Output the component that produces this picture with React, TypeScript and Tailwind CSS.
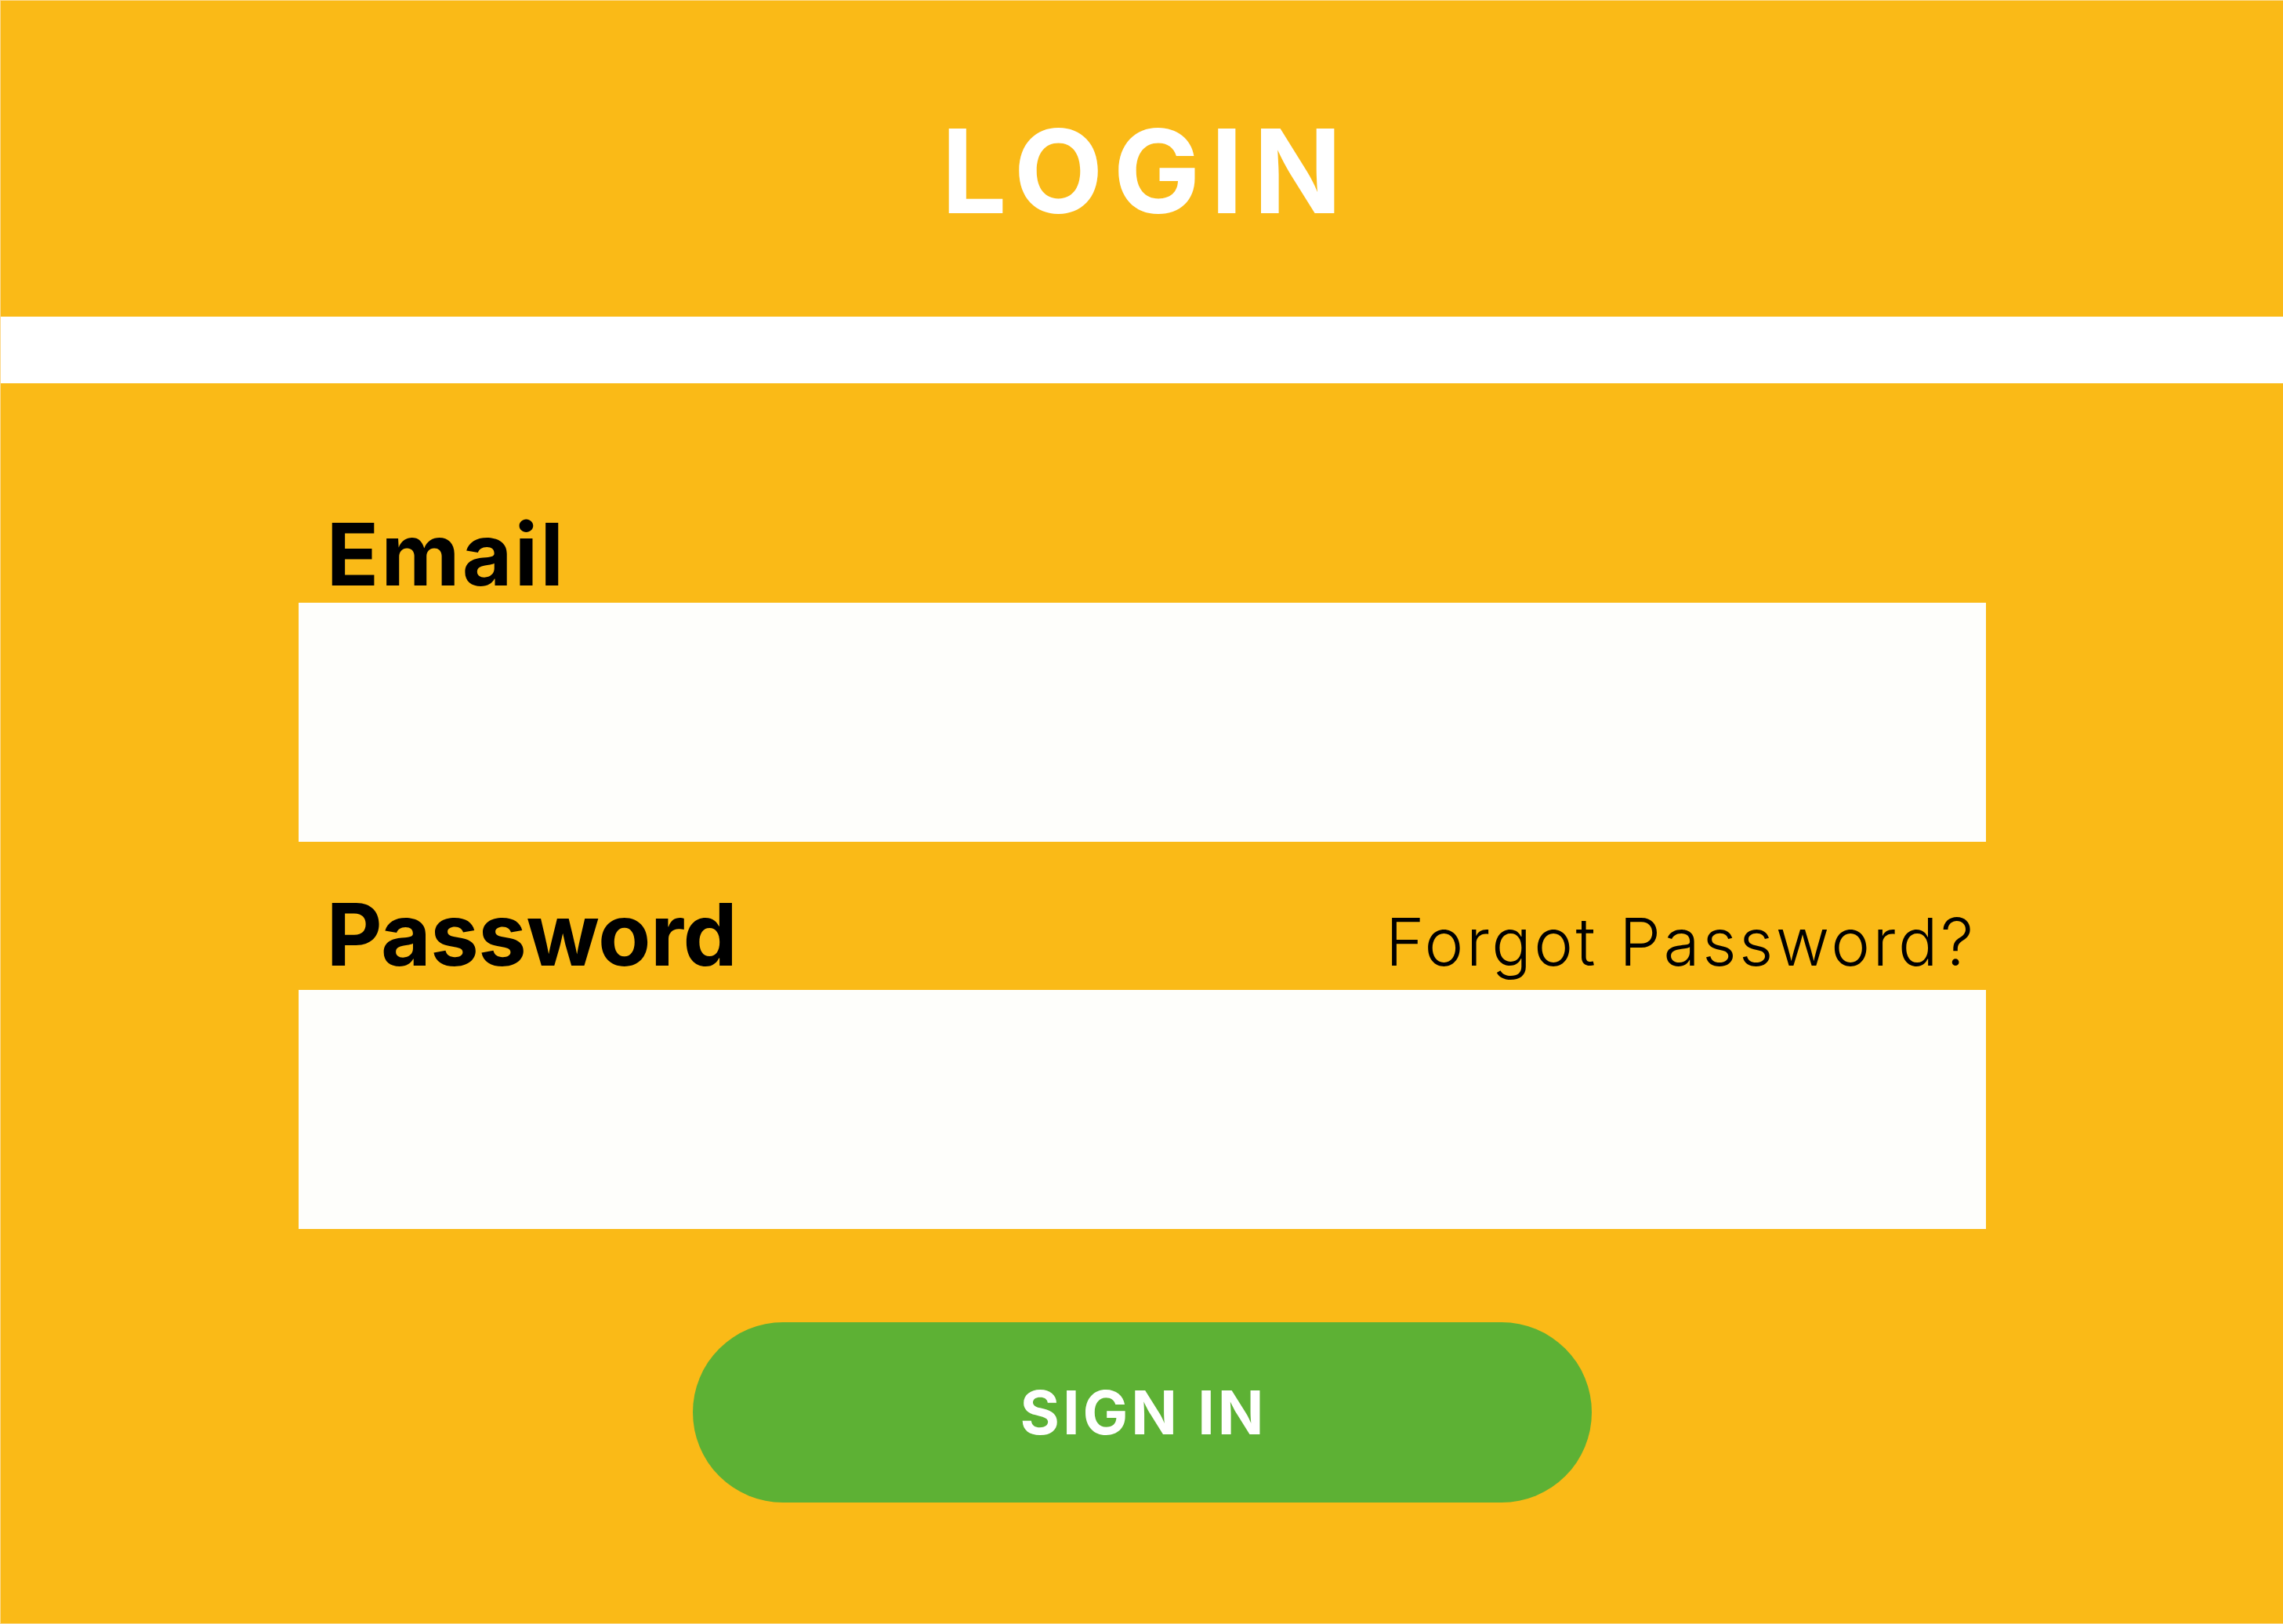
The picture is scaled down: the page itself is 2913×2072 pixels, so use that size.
import React from "react";

const font = { fontFamily: "Inter, 'Noto Sans', sans-serif" };

function Field({ label, tracking, extra }: { label: string; tracking: string; extra?: React.ReactNode }) {
  return (
    <div className="flex items-baseline justify-between pl-[36px] pr-[12px]">
      <span className={`text-[110px] font-bold leading-none text-black ${tracking}`}>{label}</span>
      {extra}
    </div>
  );
}

export default function App() {
  return (
    <div
      className="w-full h-[2072px] flex flex-col bg-white border-t border-l border-b border-[#fcd98c]"
      style={font}
    >
      <header className="h-[403px] bg-[#faba17] flex justify-center pt-[144px] pl-[12px]">
        <h1 className="text-[148px] font-bold leading-none text-white tracking-[13px]">LOGIN</h1>
      </header>

      <div className="h-[85px] bg-white" />

      <main className="flex-1 bg-[#faba17] flex flex-col items-center pt-[163px]">
        <div className="w-[2153px] flex flex-col">
          <Field label="Email" tracking="tracking-[3px]" />
          <input
            type="email"
            className="mt-[7px] h-[305px] w-full bg-[#fefefb] outline-none"
            aria-label="Email"
          />

          <div className="mt-[63px]">
            <Field
              label="Password"
              tracking="tracking-[-0.5px]"
              extra={
                <a href="#" className="text-[84px] font-light leading-none text-black tracking-[3.5px]">
                  Forgot Password?
                </a>
              }
            />
          </div>
          <input
            type="password"
            className="mt-[16px] h-[305px] w-full bg-[#fefefb] outline-none"
            aria-label="Password"
          />
        </div>

        <button className="mt-[119px] w-[1147px] h-[230px] rounded-full bg-[#5db134] flex items-center justify-center">
          <span className="text-[77px] font-bold leading-none text-white tracking-[4px] pl-[4px]">SIGN IN</span>
        </button>
      </main>
    </div>
  );
}
